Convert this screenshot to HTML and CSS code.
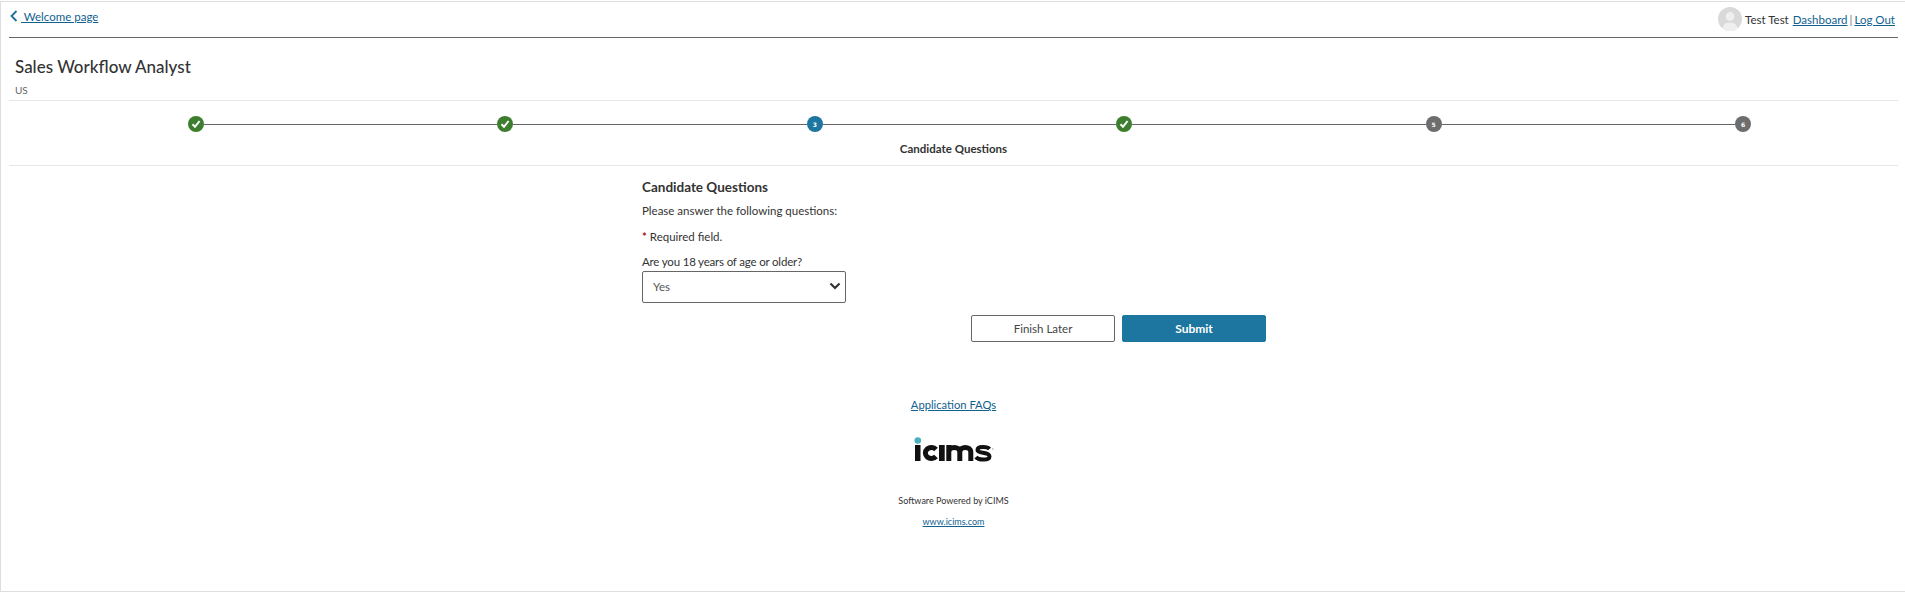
FILE: index.html
```html
<!DOCTYPE html>
<html lang="en">
<head>
<meta charset="utf-8">
<title>Sales Workflow Analyst</title>
<link rel="stylesheet" href="styles.css">
</head>
<body>
<div class="frame">
  <header class="topbar">
    <a class="back" href="#">
      <svg class="chev" width="8" height="12" viewBox="0 0 8 12"><path d="M6.500 1 1.500 6l5 5" fill="none" stroke="#1b6f9c" stroke-width="1.800"/></svg>
      <span>&nbsp;Welcome page</span>
    </a>
    <div class="user">
      <svg class="avatar" width="24" height="24" viewBox="0 0 24 24"><circle cx="12" cy="12" r="12" fill="#d9d9d9"/><circle cx="12" cy="9.500" r="4.400" fill="#efefef"/><path d="M4.500 21.500c.5-4 3.500-6 7.500-6s7 2 7.500 6A12 12 0 0 1 4.500 21.500z" fill="#efefef"/></svg>
      <span class="name">Test Test</span>
      <a href="#">Dashboard</a><span class="sep">|</span><a href="#">Log Out</a>
    </div>
  </header>
  <section class="job">
    <h1>Sales Workflow Analyst</h1>
    <p>US</p>
  </section>
  <nav class="steps">
    <div class="track">
      <span class="dot done"><svg width="10" height="10" viewBox="0 0 10 10"><path d="M1.500 5.200 4 7.800 8.600 2" fill="none" stroke="#fff" stroke-width="2"/></svg></span><i></i>
      <span class="dot done"><svg width="10" height="10" viewBox="0 0 10 10"><path d="M1.500 5.200 4 7.800 8.600 2" fill="none" stroke="#fff" stroke-width="2"/></svg></span><i></i>
      <span class="dot now">3</span><i></i>
      <span class="dot done"><svg width="10" height="10" viewBox="0 0 10 10"><path d="M1.500 5.200 4 7.800 8.600 2" fill="none" stroke="#fff" stroke-width="2"/></svg></span><i></i>
      <span class="dot todo">5</span><i></i>
      <span class="dot todo">6</span>
    </div>
    <div class="label">Candidate Questions</div>
  </nav>
  <main class="form">
    <div class="col">
      <h2>Candidate Questions</h2>
      <p>Please answer the following questions:</p>
      <p class="req"><b>*</b> Required field.</p>
      <label for="age">Are you 18 years of age or older?</label>
      <div class="selectbox" id="age">
        <span>Yes</span>
        <svg width="12" height="8" viewBox="0 0 12 8"><path d="M1.500 1.500 6 6l4.500-4.500" fill="none" stroke="#333" stroke-width="2.200"/></svg>
      </div>
    </div>
    <div class="actions">
      <button class="later" type="button">Finish Later</button>
      <button class="submit" type="button">Submit</button>
    </div>
  </main>
  <footer class="foot">
    <a class="faq" href="#">Application FAQs</a>
    <svg class="logo" width="80" height="25" viewBox="0 0 80 25" role="img" aria-label="iCIMS">
      <circle cx="3.800" cy="3.500" r="3.300" fill="#4bb0bd"/>
      <rect x="1" y="8" width="5.500" height="16" fill="#111"/>
      <path d="M22 12.500A6 5.500 0 1 0 22 19.500" fill="none" stroke="#111" stroke-width="5"/>
      <rect x="25" y="8" width="5.700" height="16" fill="#111"/>
      <path d="M34.800 24V8M34.800 15c0-6 11-6 11 0V24M45.800 15c0-6 11-6 11 0V24" fill="none" stroke="#111" stroke-width="5"/>
      <path d="M75.500 12c-2-2.500-12-3-12 1 0 4 12 1.500 12 6.500 0 4-11 4-13.500.5" fill="none" stroke="#111" stroke-width="4"/>
      <circle cx="78.800" cy="12" r=".7" fill="#999"/>
    </svg>
    <small>Software Powered by iCIMS</small>
    <a class="site" href="#">www.icims.com</a>
  </footer>
</div>
</body>
</html>
```

FILE: styles.css
```css
* { box-sizing: border-box; }
html, body { margin: 0; height: 100%; }
body {
  font-family: Lato, "Noto Sans", sans-serif;
  font-size: 11.500px;
  color: #333;
  background: #fff;
}
a { color: #11618f; text-decoration: underline; }
.frame {
  height: 591px;
  margin-top: 1px;
  border: 1px solid #dedede;
  border-right: 0;
  padding: 0 7px 0 8px;
  display: flex;
  flex-direction: column;
}
.topbar {
  height: 36px;
  border-bottom: 1px solid #666;
  display: flex;
  justify-content: space-between;
  align-items: flex-start;
  padding: 5px 3px 0 1px;
}
.back { display: flex; align-items: center; height: 24px; padding-bottom: 6px; }
.chev { margin-right: 3px; }
.user { display: flex; align-items: center; }
.avatar { margin-right: 3px; }
.name { margin-right: 4px; }
.sep { margin: 0 2px; color: #777; }
.job { height: 63px; border-bottom: 1px solid #e6e6e6; padding: 18px 6px 0; }
.job h1 { margin: 0; font-size: 17px; line-height: 22px; font-weight: 500; color: #333; }
.job p { margin: 5px 0 0; font-size: 10px; line-height: 14px; color: #666; }
.steps { height: 65px; border-bottom: 1px solid #e6e6e6; padding-top: 15px; }
.track { display: flex; align-items: center; padding: 0 147px 0 179px; }
.track i { flex: 1; height: 1px; background: #666; }
.dot {
  width: 16px; height: 16px; border-radius: 50%; flex: none;
  display: flex; align-items: center; justify-content: center;
  color: #fff; font: 700 6px "DejaVu Sans", sans-serif;
}
.done { background: #3d7d2e; }
.now { background: #1d769f; }
.todo { background: #6d6d6d; }
.label { text-align: center; font-weight: 700; line-height: 16px; margin-top: 9px; color: #333; }
.col { margin-left: 633px; width: 260px; padding-top: 11px; }
.col h2 { margin: 0; font-size: 13.500px; line-height: 20px; font-weight: 700; color: #333; }
.col p { margin: 4px 0 0; line-height: 20px; }
.col .req { margin-top: 6px; }
.req b { color: #a31621; font-weight: 700; }
.col label { display: block; margin-top: 5px; line-height: 19px; letter-spacing: -.18px; }
.selectbox {
  width: 204px; height: 32px; border: 1px solid #666; border-radius: 2px;
  display: flex; justify-content: space-between; align-items: center;
  padding: 0 4px 2px 10px; color: #555;
}
.actions { display: flex; gap: 7px; margin: 12px 0 0 962px; }
.actions button {
  width: 144px; height: 27px; border-radius: 2px; font: 400 11.500px Lato, sans-serif;
}
.later { background: #fff; border: 1px solid #666; color: #444; }
.actions .submit { background: #1d769f; border: 1px solid #1d769f; color: #fff; font-weight: 700; font-size: 12px; }
.foot { display: flex; flex-direction: column; align-items: center; margin-top: 55px; }
.faq { font-size: 11.200px; line-height: 16px; }
.logo { margin-top: 24px; }
.foot small { margin-top: 32px; font-size: 9px; line-height: 14px; color: #333; }
.site { margin-top: 7px; font-size: 9px; line-height: 14px; }
```
